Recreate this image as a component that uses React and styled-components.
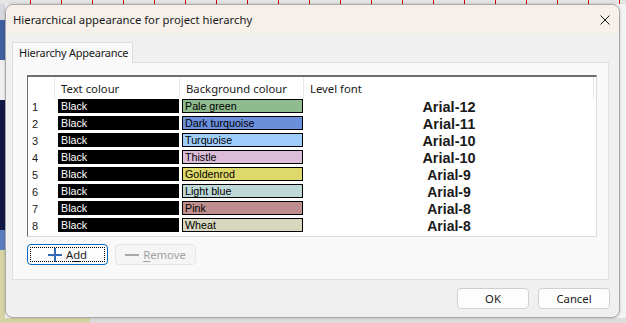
import React from "react";
import styled, { createGlobalStyle } from "styled-components";

const GlobalStyle = createGlobalStyle`
  html, body {
    margin: 0;
    padding: 0;
  }
  body {
    width: 626px;
    height: 323px;
    overflow: hidden;
    font-family: "Segoe UI", "Noto Sans", sans-serif;
    color: #1a1a1a;
  }
  * {
    box-sizing: border-box;
  }
`;

const Desktop = styled.div`
  width: 626px;
  height: 323px;
  padding: 4px 6px 5px 5px;
  background:
    repeating-linear-gradient(to right, #e4e4e4 0 30px, #d00000 30px 31px) top left / 100% 4px no-repeat,
    linear-gradient(
        to bottom,
        #d4d7dd 0 20px,
        #3f5f9e 20px 60px,
        #efefef 60px 100px,
        #111848 100px 230px,
        #5b7cc0 230px 250px,
        #d6d4a4 250px
      )
      left / 5px 100% no-repeat,
    linear-gradient(to right, #d6d4a4 0 90px, #dcdcdc 90px) bottom / 100% 5px no-repeat,
    #f3f3f3;
`;

const Dialog = styled.div`
  height: 100%;
  display: flex;
  flex-direction: column;
  background: #f0f0f0;
  border: 1px solid #a8a8a8;
  border-radius: 8px;
  overflow: hidden;
  box-shadow: 0 0 3px rgba(0, 0, 0, 0.2);
`;

const TitleBar = styled.div`
  height: 29px;
  flex: none;
  display: flex;
  align-items: center;
  justify-content: space-between;
  padding: 0 9px 0 7px;
  background: #f6f0ea;
  font-size: 11.3px;
`;

const CloseIcon = styled.svg`
  width: 10px;
  height: 10px;
  display: block;
`;

const Body = styled.div`
  flex: 1;
  display: flex;
  flex-direction: column;
  padding: 8px 9px 0 6px;
`;

const TabStrip = styled.div`
  display: flex;
  height: 20px;
`;

const Tab = styled.div`
  width: 121px;
  height: 21px;
  padding: 0 0 1px 6px;
  display: flex;
  align-items: center;
  white-space: nowrap;
  font-size: 11px;
  letter-spacing: -0.25px;
  background: #f9f9f9;
  border: 1px solid #dcdcdc;
  border-bottom: none;
  position: relative;
  z-index: 1;
`;

const TabPanel = styled.div`
  width: 597px;
  height: 218px;
  padding: 12px 0 0 14px;
  background: #f9f9f9;
  border: 1px solid #e0e0e0;
`;

const ListBox = styled.div`
  width: 570px;
  height: 162px;
  background: #ffffff;
  border-top: 2px solid #6e6e6e;
  border-left: 1px solid #6e6e6e;
  border-right: 1px solid #dcdcdc;
  border-bottom: 1px solid #dcdcdc;
`;

const Grid = styled.div`
  display: grid;
  grid-template-columns: 27px 125px 124px 290px;
  grid-template-rows: 22px;
  grid-auto-rows: 17px;
`;

const HeaderCell = styled.div`
  padding-left: 6px;
  display: flex;
  align-items: center;
  font-size: 11.3px;
  white-space: nowrap;
  border-right: 1px solid #e8e8e8;
`;

const RowNum = styled.div`
  padding: 1px 0 0 4px;
  font-family: "Liberation Sans", Arial, sans-serif;
  font-size: 11px;
  line-height: 14px;
`;

const Swatch = styled.div`
  height: 14px;
  margin: 0 ${(p) => p.$mr}px 0 ${(p) => p.$ml}px;
  background: ${(p) => p.$bg};
  color: ${(p) => p.$fg};
  border: 1px solid #000;
  padding-left: 2px;
  font-family: "Liberation Sans", Arial, sans-serif;
  font-size: 10.7px;
  line-height: 12px;
  white-space: nowrap;
`;

const FontCell = styled.div`
  height: 15px;
  display: flex;
  align-items: center;
  justify-content: center;
  font-family: "Liberation Sans", Arial, sans-serif;
  font-weight: bold;
  font-size: ${(p) => p.$size}px;
`;

const ListButtons = styled.div`
  display: flex;
  gap: 7px;
  margin-top: 7px;
`;

const Button = styled.button`
  width: ${(p) => p.$w}px;
  height: 21px;
  padding: 0;
  display: flex;
  align-items: center;
  justify-content: center;
  gap: 4px;
  font-family: "Segoe UI", "Noto Sans", sans-serif;
  font-size: 11.3px;
  color: #1a1a1a;
  background: #fdfdfd;
  border: 1px solid #d0d0d0;
  border-radius: 4px;
  position: relative;

  &:disabled {
    color: #a0a0a0;
    background: #f5f5f5;
    border-color: #e5e5e5;
  }
`;

const FocusedButton = styled(Button)`
  border-color: #0067c0;
  &::after {
    content: "";
    position: absolute;
    inset: 2px;
    border: 1px dotted #000;
    border-radius: 1px;
  }
`;

const Mnemonic = styled.span`
  text-decoration: underline;
  text-underline-offset: 2px;
`;

const Footer = styled.div`
  display: flex;
  justify-content: flex-end;
  gap: 9px;
  padding-top: 8px;
`;

const rows = [
  { bg: "Pale green", color: "#8fbb8f", font: "Arial-12", size: 14.5 },
  { bg: "Dark turquoise", color: "#6c8fdc", font: "Arial-11", size: 14.5 },
  { bg: "Turquoise", color: "#9fcdfb", font: "Arial-10", size: 14.5 },
  { bg: "Thistle", color: "#dbbdd9", font: "Arial-10", size: 14.5 },
  { bg: "Goldenrod", color: "#dfd86a", font: "Arial-9", size: 14 },
  { bg: "Light blue", color: "#bfd9d9", font: "Arial-9", size: 14 },
  { bg: "Pink", color: "#bf8f8f", font: "Arial-8", size: 14 },
  { bg: "Wheat", color: "#d8d8bf", font: "Arial-8", size: 14 },
];

export default function App() {
  return (
    <Desktop>
      <GlobalStyle />
      <Dialog>
        <TitleBar>
          <span>Hierarchical appearance for project hierarchy</span>
          <CloseIcon viewBox="0 0 10 10">
            <path d="M0.5 0.5 L9.5 9.5 M9.5 0.5 L0.5 9.5" stroke="#1a1a1a" strokeWidth="1" />
          </CloseIcon>
        </TitleBar>
        <Body>
          <TabStrip>
            <Tab>Hierarchy Appearance</Tab>
          </TabStrip>
          <TabPanel>
            <ListBox>
              <Grid>
                <HeaderCell />
                <HeaderCell>Text colour</HeaderCell>
                <HeaderCell>Background colour</HeaderCell>
                <HeaderCell>Level font</HeaderCell>
                {rows.map((r, i) => (
                  <React.Fragment key={i}>
                    <RowNum>{i + 1}</RowNum>
                    <Swatch $bg="#000" $fg="#fff" $ml={3} $mr={1}>
                      Black
                    </Swatch>
                    <Swatch $bg={r.color} $fg="#000" $ml={2} $mr={1}>
                      {r.bg}
                    </Swatch>
                    <FontCell $size={r.size}>{r.font}</FontCell>
                  </React.Fragment>
                ))}
              </Grid>
            </ListBox>
            <ListButtons>
              <FocusedButton $w={81}>
                <svg width="14" height="14" viewBox="0 0 14 14">
                  <path d="M7 0 V14 M0 7 H14" stroke="#2f6cb3" strokeWidth="2" />
                </svg>
                <span>
                  A<Mnemonic>d</Mnemonic>d
                </span>
              </FocusedButton>
              <Button $w={81} disabled>
                <svg width="14" height="14" viewBox="0 0 14 14">
                  <path d="M0 7 H14" stroke="#a8a8a8" strokeWidth="2" />
                </svg>
                <span>
                  <Mnemonic>R</Mnemonic>emove
                </span>
              </Button>
            </ListButtons>
          </TabPanel>
          <Footer>
            <Button $w={72}>OK</Button>
            <Button $w={72}>Cancel</Button>
          </Footer>
        </Body>
      </Dialog>
    </Desktop>
  );
}
